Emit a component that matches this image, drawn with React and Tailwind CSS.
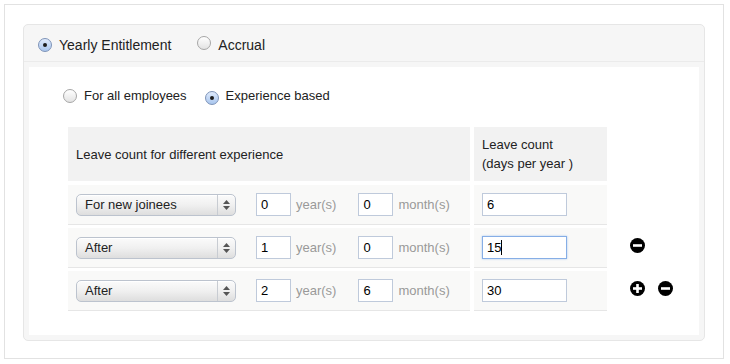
import React from "react";

const font = { fontFamily: '"Liberation Sans", Arial, sans-serif' };

const Radio = ({ checked }) => (
  <span
    className={`inline-flex items-center justify-center w-[14px] h-[14px] rounded-full border ${
      checked
        ? "border-[#7d93b8] bg-gradient-to-b from-[#dfeafb] to-[#a9c6ee]"
        : "border-[#a6a6a6] bg-gradient-to-b from-[#ffffff] to-[#e3e3e3]"
    }`}
  >
    {checked && <span className="w-[4px] h-[4px] rounded-full bg-[#1c1c1c]" />}
  </span>
);

const Select = ({ label }) => (
  <div className="flex items-center w-[160px] h-[22px] rounded-[5px] border border-[#bcc3ce] bg-gradient-to-b from-[#fbfbfb] via-[#f0f0f0] to-[#dedede] shadow-[inset_0_1px_0_#ffffff]">
    <span className="flex-1 pl-[8px] text-[13px] text-[#222]">{label}</span>
    <span className="flex flex-col items-center justify-center w-[18px] h-full border-l border-[#c8ccd2] gap-[2px]">
      <svg width="7" height="4" viewBox="0 0 7 4"><path d="M0 4 L3.5 0 L7 4 Z" fill="#555" /></svg>
      <svg width="7" height="4" viewBox="0 0 7 4"><path d="M0 0 L3.5 4 L7 0 Z" fill="#555" /></svg>
    </span>
  </div>
);

const Input = ({ value, width = "w-[35px]", focused = false }) => (
  <div
    className={`flex items-center ${width} h-[23px] bg-white border pl-[4px] text-[13px] text-black ${
      focused ? "border-[#86aee6] shadow-[0_0_2px_#a9c8f0]" : "border-[#bfcadb]"
    }`}
  >
    <span>{value}</span>
    {focused && <span className="w-[1px] h-[15px] bg-black" />}
  </div>
);

const Circle = ({ plus }) => (
  <svg width="15" height="15" viewBox="0 0 15 15">
    <circle cx="7.5" cy="7.5" r="7.5" fill="#000" />
    <rect x="3" y="6.2" width="9" height="2.6" fill="#fff" />
    {plus && <rect x="6.2" y="3" width="2.6" height="9" fill="#fff" />}
  </svg>
);

const rows = [
  { label: "For new joinees", years: "0", months: "0", count: "6", icons: [] },
  { label: "After", years: "1", months: "0", count: "15", focused: true, icons: ["minus"] },
  { label: "After", years: "2", months: "6", count: "30", icons: ["plus", "minus"] },
];

export default function App() {
  return (
    <div className="w-[730px] h-[364px] bg-white p-[4px]" style={font}>
      <div className="w-[720px] h-[355px] border border-[#e2e2e2] pt-[19px] pl-[18px] pr-[18px] pb-[17px]">
        <div className="h-[317px] rounded-[5px] border border-[#e6e6e6] bg-[#f6f6f6] flex flex-col">
          <div className="h-[37px] flex items-center pl-[14px] pt-[4px] border-b border-[#ebebeb] text-[14px] text-[#222]">
            <Radio checked />
            <span className="ml-[7px]">Yearly Entitlement</span>
            <span className="ml-[26px]"><Radio /></span>
            <span className="ml-[7px]">Accrual</span>
          </div>
          <div className="flex-1 m-[5px] bg-white pl-[39px]">
            <div className="h-[60px] flex items-center pb-[2px] text-[13px] text-[#222]">
              <span className="-ml-[5px] flex items-center">
                <Radio />
                <span className="ml-[7px]">For all employees</span>
                <span className="ml-[18px]"><Radio checked /></span>
                <span className="ml-[7px]">Experience based</span>
              </span>
            </div>
            <div className="flex flex-col gap-[3px] text-[13px]">
              <div className="flex gap-[4px] mb-[1px]">
                <div className="w-[402px] h-[54px] bg-[#f2f2f2] flex items-center pl-[8px] pt-[1px] text-[#222]">
                  Leave count for different experience
                </div>
                <div className="w-[133px] h-[54px] bg-[#f2f2f2] flex flex-col justify-center pl-[8px] leading-[19px] text-[#222]">
                  <span>Leave count</span>
                  <span>(days per year )</span>
                </div>
              </div>
              {rows.map((r, i) => (
                <div key={i} className="flex items-center">
                  <div className="w-[402px] h-[40px] bg-[#f9f9f8] border-b border-[#e6e6e6] flex items-center pl-[8px]">
                    <Select label={r.label} />
                    <span className="ml-[20px]"><Input value={r.years} /></span>
                    <span className="ml-[5px] text-[#999]">year(s)</span>
                    <span className="ml-[22px]"><Input value={r.months} /></span>
                    <span className="ml-[5px] text-[#999]">month(s)</span>
                  </div>
                  <div className="ml-[4px] w-[133px] h-[40px] bg-[#f9f9f8] border-b border-[#e6e6e6] flex items-center pl-[8px]">
                    <Input value={r.count} width="w-[85px]" focused={r.focused} />
                  </div>
                  <div className="ml-[23px] pb-[5px] flex items-center gap-[13px]">
                    {r.icons.map((ic, j) => (
                      <Circle key={j} plus={ic === "plus"} />
                    ))}
                  </div>
                </div>
              ))}
            </div>
          </div>
        </div>
      </div>
    </div>
  );
}
